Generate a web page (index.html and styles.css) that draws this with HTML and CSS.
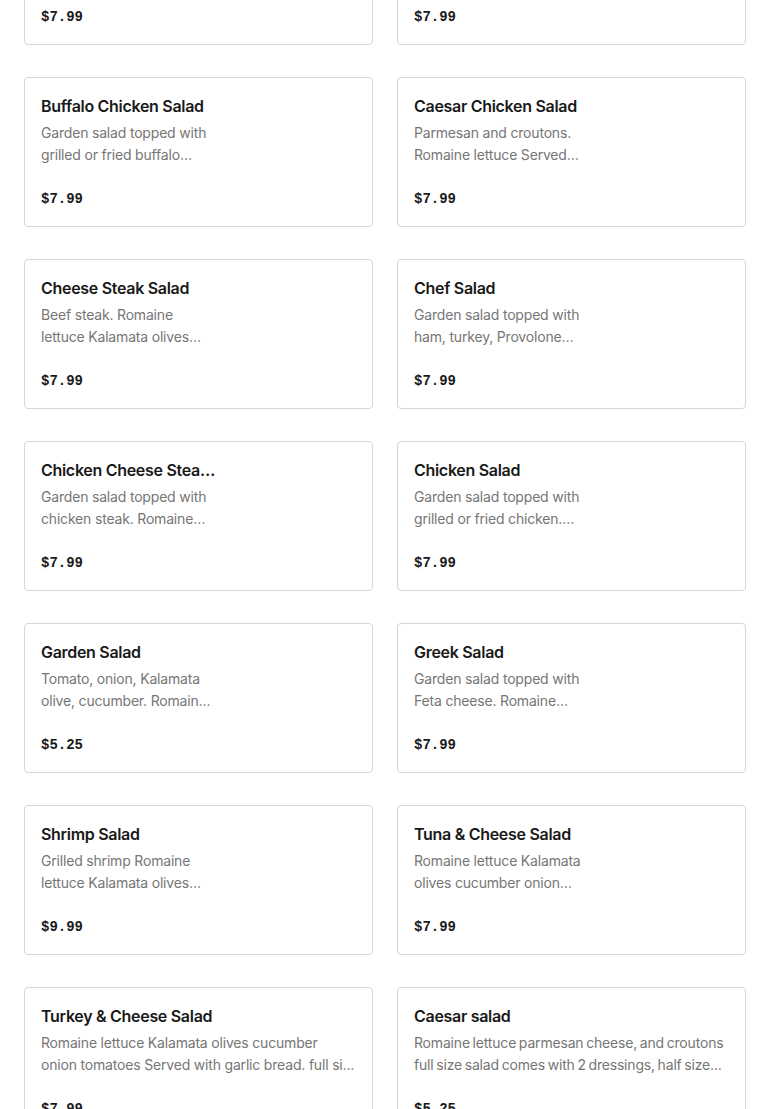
FILE: index.html
```html
<!DOCTYPE html>
<html>
<head>
<meta charset="utf-8">
<link rel="stylesheet" href="styles.css">
</head>
<body>
<div class="menu">
  <div class="card narrow"><div class="info"><div class="title">Antipasto Salad</div><div class="desc">Garden salad topped with ham, salami, Provolone cheese.</div><div class="price">$7.99</div></div></div>
  <div class="card narrow"><div class="info"><div class="title">Grilled Chicken Salad</div><div class="desc">Garden salad topped with grilled chicken. Romaine lettuce.</div><div class="price">$7.99</div></div></div>

  <div class="card narrow"><div class="info"><div class="title">Buffalo Chicken Salad</div><div class="desc">Garden salad topped with grilled or fried buffalo chicken. Romaine lettuce.</div><div class="price">$7.99</div></div></div>
  <div class="card narrow"><div class="info"><div class="title">Caesar Chicken Salad</div><div class="desc">Parmesan and croutons. Romaine lettuce Served with garlic bread.</div><div class="price">$7.99</div></div></div>

  <div class="card narrow"><div class="info"><div class="title">Cheese Steak Salad</div><div class="desc">Beef steak. Romaine lettuce Kalamata olives cucumber onion tomatoes.</div><div class="price">$7.99</div></div></div>
  <div class="card narrow"><div class="info"><div class="title">Chef Salad</div><div class="desc">Garden salad topped with ham, turkey, Provolone cheese.</div><div class="price">$7.99</div></div></div>

  <div class="card narrow"><div class="info"><div class="title">Chicken Cheese Steak Salad</div><div class="desc">Garden salad topped with chicken steak. Romaine lettuce.</div><div class="price">$7.99</div></div></div>
  <div class="card narrow"><div class="info"><div class="title">Chicken Salad</div><div class="desc">Garden salad topped with grilled or fried chicken. Romaine lettuce.</div><div class="price">$7.99</div></div></div>

  <div class="card narrow"><div class="info"><div class="title">Garden Salad</div><div class="desc">Tomato, onion, Kalamata olive, cucumber. Romaine lettuce.</div><div class="price">$5.25</div></div></div>
  <div class="card narrow"><div class="info"><div class="title">Greek Salad</div><div class="desc">Garden salad topped with Feta cheese. Romaine lettuce.</div><div class="price">$7.99</div></div></div>

  <div class="card narrow"><div class="info"><div class="title">Shrimp Salad</div><div class="desc">Grilled shrimp Romaine lettuce Kalamata olives cucumber onion tomatoes.</div><div class="price">$9.99</div></div></div>
  <div class="card narrow"><div class="info"><div class="title">Tuna &amp; Cheese Salad</div><div class="desc">Romaine lettuce Kalamata olives cucumber onion tomatoes.</div><div class="price">$7.99</div></div></div>

  <div class="card"><div class="info"><div class="title">Turkey &amp; Cheese Salad</div><div class="desc">Romaine lettuce Kalamata olives cucumber onion tomatoes Served with garlic bread. full si...</div><div class="price">$7.99</div></div></div>
  <div class="card"><div class="info"><div class="title">Caesar salad</div><div class="desc tight">Romaine lettuce parmesan cheese, and croutons full size salad comes with 2 dressings, half size...</div><div class="price">$5.25</div></div></div>
</div>
</body>
</html>
```
FILE: styles.css
```css
html, body {
  margin: 0;
  padding: 0;
  background: #ffffff;
}
body {
  overflow: hidden;
  font-family: "Inter", "Liberation Sans", sans-serif;
  color: #191919;
}
.menu {
  display: grid;
  grid-template-columns: 1fr 1fr;
  column-gap: 24px;
  row-gap: 32px;
  padding: 0 24px;
  margin-top: -105px;
}
.card {
  border: 1px solid #d6d6d6;
  border-radius: 4px;
  height: 150px;
  box-sizing: border-box;
  padding: 16px 16px 17px 16px;
  display: flex;
}
.info {
  display: flex;
  flex-direction: column;
  min-width: 0;
  flex: 1;
}
.title {
  font-size: 16px;
  font-weight: 600;
  line-height: 24px;
  letter-spacing: -0.3px;
  margin-bottom: 4px;
  white-space: nowrap;
  overflow: hidden;
  text-overflow: ellipsis;
  color: #191919;
}
.desc {
  font-size: 14px;
  line-height: 22px;
  letter-spacing: -0.185px;
  color: #767676;
  display: -webkit-box;
  -webkit-line-clamp: 2;
  -webkit-box-orient: vertical;
  overflow: hidden;
  height: 44px;
}
.desc.tight {
  word-spacing: -1px;
}
.narrow .title {
  max-width: 177px;
}
.narrow .desc {
  max-width: 176px;
}
.price {
  margin-top: 23px;
  font-family: "Liberation Mono", monospace;
  font-weight: 700;
  font-size: 14px;
  line-height: 20px;
  color: #191919;
}
```
